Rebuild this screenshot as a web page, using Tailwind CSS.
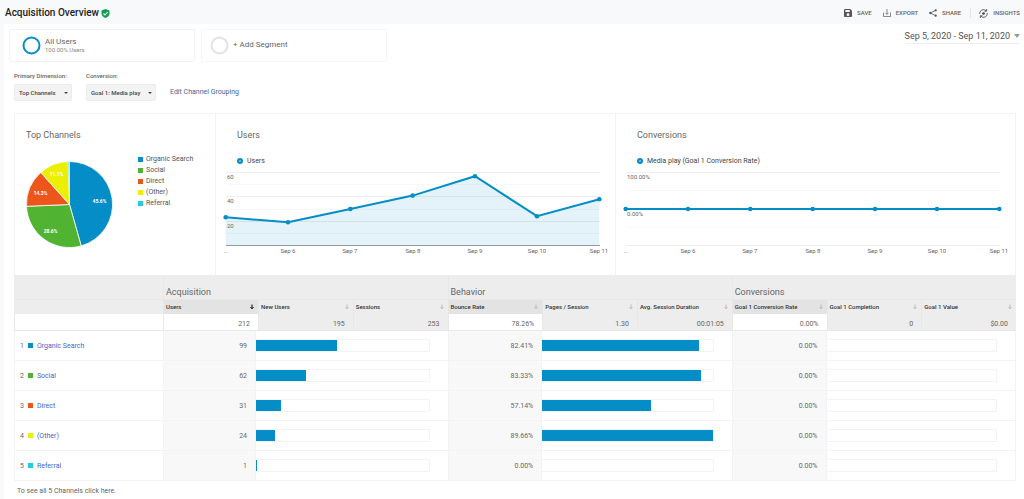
<!DOCTYPE html>
<html lang="en">
<head>
<meta charset="utf-8">
<title>Acquisition Overview</title>
<script src="https://cdn.jsdelivr.net/npm/@tailwindcss/browser@4"></script>
</head>
<body class="bg-[#f8f9fb] font-['Roboto',sans-serif] text-[7px] leading-[10px] text-[#666]">
<svg class="hidden">
  <symbol id="down" viewBox="0 0 6 8"><path d="M3 1.500v4M1.500 4.200 3 5.800l1.500-1.600" fill="none" stroke="currentColor" stroke-width="1"/></symbol>
</svg>

<header class="flex h-6 items-center justify-between pl-[5px] pr-1">
  <h1 class="flex items-center gap-[2px] pt-[2px] text-[10px] font-medium text-[#222]">Acquisition Overview
    <svg class="size-[9px]" viewBox="0 0 18 18"><path d="M9 0 17 3v6c0 4.500-3.500 7.500-8 9-4.500-1.500-8-4.500-8-9V3z" fill="#109d4c"/><path d="m5 9 3 3 5.500-6" fill="none" stroke="#fff" stroke-width="2.200"/></svg>
  </h1>
  <nav class="flex items-center gap-[11px] pt-[2px] text-[6px] font-medium text-[#666]">
    <button class="flex items-center gap-[5px]"><svg class="size-2" viewBox="0 0 18 18"><path fill="#555" fill-rule="evenodd" d="M2 0h12l4 4v12a2 2 0 0 1-2 2H2a2 2 0 0 1-2-2V2a2 2 0 0 1 2-2zm1 2v5h10V2zm6 7.500a3.200 3.200 0 1 0 0 6.400 3.200 3.200 0 0 0 0-6.400z"/></svg>SAVE</button>
    <button class="flex items-center gap-[5px]"><svg class="size-2" viewBox="0 0 18 18" fill="none" stroke="#777" stroke-width="2"><path d="M1 8v9h16V8M9 0v12M5.500 8.500 9 12l3.500-3.500"/></svg>EXPORT</button>
    <button class="flex items-center gap-[5px]"><svg class="size-2" viewBox="0 0 18 18" fill="#555"><path d="M15 3 3 9l12 6" fill="none" stroke="#555" stroke-width="1.800"/><circle cx="15" cy="3" r="2.600"/><circle cx="3" cy="9" r="2.600"/><circle cx="15" cy="15" r="2.600"/></svg>SHARE</button>
    <button class="-ml-[2px] flex items-center gap-[5px] border-l border-[#e2e3e5] pl-2"><svg class="size-[9px]" viewBox="0 0 20 20" fill="none" stroke="#555" stroke-width="2"><path d="M1.500 11A8.500 8.500 0 0 1 16 4M18.500 9A8.500 8.500 0 0 1 4 16M17 0v5h-5M3 20v-5h5"/><circle cx="10" cy="10" r="3" fill="#444" stroke="none"/></svg>INSIGHTS</button>
  </nav>
</header>

<main class="ml-1 min-h-[475px] bg-white">
  <section class="flex items-start justify-between pl-[5px] pr-1 pt-[5px]">
    <div class="flex gap-[6px]">
      <button class="flex h-[33px] w-[186px] items-center gap-1 rounded-xs border border-[#f3f3f3] pl-3 text-left">
        <svg class="size-[19px]" viewBox="0 0 19 19"><circle cx="9.500" cy="9.500" r="8" fill="none" stroke="#058dc7" stroke-width="2"/></svg>
        <span><span class="block text-[8px] leading-[9px]">All Users</span><span class="block text-[6px] leading-[8px] text-[#888]">100.00% Users</span></span>
      </button>
      <button class="flex h-[33px] w-[186px] items-center gap-1 rounded-xs border border-[#f5f5f5] pl-2 text-left">
        <svg class="size-[19px]" viewBox="0 0 19 19"><circle cx="9.500" cy="9.500" r="8" fill="none" stroke="#e2e2e2" stroke-width="2"/></svg>
        <span class="pb-[2px] text-[8px]">+ Add Segment</span>
      </button>
    </div>
    <button class="flex h-[15px] items-center gap-1 border-b border-[#eee] text-[9px] text-[#555]">Sep 5, 2020 - Sep 11, 2020
      <svg class="h-1 w-[6px]" viewBox="0 0 6 4"><path d="M0 0h6L3 4z" fill="#999"/></svg></button>
  </section>

  <section class="flex items-end gap-[14px] pl-[10px] pt-[9px] text-[6px]">
    <div><label for="dimension" class="block font-medium">Primary Dimension:</label>
      <div class="relative mt-[3px] w-[58px]"><select id="dimension" class="block h-[17px] w-full appearance-none rounded-xs border border-[#ececec] bg-[#f3f3f3] pl-1 font-medium text-[#444]"><option>Top Channels</option></select>
      <svg class="pointer-events-none absolute right-1 top-2 h-[2px] w-1" viewBox="0 0 4 2"><path d="M0 0h4L2 2z" fill="#444"/></svg></div></div>
    <div><label for="conversion" class="block font-medium">Conversion:</label>
      <div class="relative mt-[3px] w-[70px]"><select id="conversion" class="block h-[17px] w-full appearance-none rounded-xs border border-[#ececec] bg-[#f3f3f3] pl-1 font-medium text-[#444]"><option>Goal 1: Media play</option></select>
      <svg class="pointer-events-none absolute right-1 top-2 h-[2px] w-1" viewBox="0 0 4 2"><path d="M0 0h4L2 2z" fill="#444"/></svg></div></div>
    <a href="#" class="pb-1 text-[7px] text-[#44689b]">Edit Channel Grouping</a>
  </section>

  <div class="ml-[10px] mr-2 mt-3">
    <section class="grid grid-cols-[200px_1fr_1fr] border border-b-0 border-[#f3f3f3]">
      <div class="pb-[27px] pl-[11px] pt-4">
        <h2 class="text-[9px]">Top Channels</h2>
        <div class="mt-[14px] flex gap-[25px]">
          <svg class="mt-[7px] size-[87px]" viewBox="-43.500 -43.500 87 87" stroke="#fff" stroke-width=".800">
            <path fill="#058dc7" d="M0 0V-43A43 43 0 0 1 11.700 41.400Z"/>
            <path fill="#50b432" d="M0 0 11.700 41.400A43 43 0 0 1-43 1.800Z"/>
            <path fill="#ed561b" d="M0 0-43 1.800A43 43 0 0 1-28.700-32Z"/>
            <path fill="#edef00" d="M0 0-28.700-32A43 43 0 0 1-1.500-43Z"/>
            <path fill="#9fe3f5" stroke="none" d="M0 0-1.500-43H0Z"/>
            <g fill="#fff" stroke="none" font-size="5" font-weight="700" text-anchor="middle"><text x="30" y="-2">45.6%</text><text x="-19" y="28">28.6%</text><text x="-29" y="-10">14.3%</text><text x="-13" y="-29">11.1%</text></g>
          </svg>
          <ul class="text-[7px] leading-[11px] text-[#555] [&>li]:flex [&>li]:items-center [&>li]:gap-[3px] [&_i]:size-[5px]">
            <li><i class="bg-[#058dc7]"></i>Organic Search</li>
            <li><i class="bg-[#50b432]"></i>Social</li>
            <li><i class="bg-[#ed561b]"></i>Direct</li>
            <li><i class="bg-[#edef00]"></i>(Other)</li>
            <li><i class="bg-[#24cbe5]"></i>Referral</li>
          </ul>
        </div>
      </div>
      <div class="border-l border-[#f3f3f3] pb-3 pt-4">
        <h2 class="pl-[21px] text-[9px]">Users</h2>
        <p class="mt-4 flex items-center gap-1 pl-[21px] text-[#444]"><i class="size-[6px] rounded-full border-2 border-[#058dc7] bg-[#7cc3e3]"></i>Users</p>
        <svg class="block w-full" viewBox="0 0 399 94">
          <path d="M10 6.500h374M10 30.500h374M10 55.500h374" stroke="#eee"/><path d="M10 18.500h374M10 43.500h374M10 67.500h374" stroke="#f8f8f8"/>
          <path d="M9.700 51.300 72 56.300 134.300 43 196.700 29.600 259 10.200 321 50.200 383.300 33.300V79H9.700Z" fill="#058dc7" fill-opacity=".11"/>
          <path d="M10 79.500h374" stroke="#999"/>
          <path d="M9.700 51.300 72 56.300 134.300 43 196.700 29.600 259 10.200 321 50.200 383.300 33.300" fill="none" stroke="#058dc7" stroke-width="2"/>
          <g fill="#058dc7"><circle cx="9.700" cy="51.300" r="2.300"/><circle cx="72" cy="56.300" r="2.300"/><circle cx="134.300" cy="43" r="2.300"/><circle cx="196.700" cy="29.600" r="2.300"/><circle cx="259" cy="10.200" r="2.300"/><circle cx="321" cy="50.200" r="2.300"/><circle cx="383.300" cy="33.300" r="2.300"/></g>
          <g fill="#666" font-size="6"><text x="11" y="13">60</text><text x="11" y="37">40</text><text x="11" y="62">20</text>
          <g text-anchor="middle"><text x="10" y="87">...</text><text x="72" y="87">Sep 6</text><text x="134" y="87">Sep 7</text><text x="197" y="87">Sep 8</text><text x="259" y="87">Sep 9</text><text x="321" y="87">Sep 10</text><text x="383" y="87">Sep 11</text></g></g>
        </svg>
      </div>
      <div class="border-l border-[#f3f3f3] pb-3 pt-4">
        <h2 class="pl-[21px] text-[9px]">Conversions</h2>
        <p class="mt-4 flex items-center gap-1 pl-[21px] text-[#444]"><i class="size-[6px] rounded-full border-2 border-[#058dc7] bg-[#7cc3e3]"></i>Media play (Goal 1 Conversion Rate)</p>
        <svg class="block w-full" viewBox="0 0 399 94">
          <path d="M10 6.500h374M10 79.500h374" stroke="#eee"/><path d="M10 24.500h374M10 61.500h374" stroke="#f8f8f8"/>
          <path d="M9.700 43h373.600" stroke="#058dc7" stroke-width="2"/>
          <g fill="#058dc7"><circle cx="9.700" cy="43" r="2.300"/><circle cx="72" cy="43" r="2.300"/><circle cx="134.300" cy="43" r="2.300"/><circle cx="196.700" cy="43" r="2.300"/><circle cx="259" cy="43" r="2.300"/><circle cx="321" cy="43" r="2.300"/><circle cx="383.300" cy="43" r="2.300"/></g>
          <g fill="#666" font-size="6"><text x="11" y="13">100.00%</text><text x="11" y="50">0.00%</text>
          <g text-anchor="middle"><text x="10" y="87">...</text><text x="72" y="87">Sep 6</text><text x="134" y="87">Sep 7</text><text x="197" y="87">Sep 8</text><text x="259" y="87">Sep 9</text><text x="321" y="87">Sep 10</text><text x="383" y="87">Sep 11</text></g></g>
        </svg>
      </div>
    </section>

    <table class="w-full table-fixed border-separate border-spacing-0 [&_button]:flex [&_button]:w-full [&_button]:items-center [&_button]:justify-between [&_button_svg]:h-2 [&_button_svg]:w-[6px] [&_button_svg]:text-[#bbb]">
      <colgroup><col class="w-[149px]"><col class="w-[93px]"><col class="w-[2px]"><col><col><col><col><col><col><col><col></colgroup>
      <thead class="bg-[#ededed]">
        <tr class="h-[25px] text-left align-bottom text-[9px] [&>th]:border-b [&>th]:border-[#e8e8e8] [&>th]:pb-[2px] [&>th]:pl-[2px] [&>th]:font-normal [&>th+th]:border-l">
          <td class="border-b border-[#e8e8e8]"></td><th colspan="4" scope="colgroup" class="border-l">Acquisition</th><th colspan="3" scope="colgroup">Behavior</th><th colspan="3" scope="colgroup">Conversions</th>
        </tr>
        <tr class="h-[14px] text-[6px] leading-[8px] text-[#333] [&>th]:border-l [&>th]:border-[#e6e6e6] [&>th]:p-0 [&>th]:pl-[2px] [&>th]:pr-[3px] [&>th]:font-medium">
          <td></td>
          <th colspan="2" scope="col" class="bg-[#e3e3e3]"><button>Users<svg class="text-black!"><use href="#down"/></svg></button></th>
          <th scope="col"><button>New Users<svg><use href="#down"/></svg></button></th>
          <th scope="col"><button>Sessions<svg><use href="#down"/></svg></button></th>
          <th scope="col" class="bg-[#e3e3e3]"><button>Bounce Rate<svg><use href="#down"/></svg></button></th>
          <th scope="col"><button>Pages / Session<svg><use href="#down"/></svg></button></th>
          <th scope="col"><button>Avg. Session Duration<svg><use href="#down"/></svg></button></th>
          <th scope="col" class="bg-[#e3e3e3]"><button>Goal 1 Conversion Rate<svg><use href="#down"/></svg></button></th>
          <th scope="col"><button>Goal 1 Completion<svg><use href="#down"/></svg></button></th>
          <th scope="col"><button>Goal 1 Value<svg><use href="#down"/></svg></button></th>
        </tr>
        <tr class="h-[17px] text-right [&>td]:border-b [&>td]:border-l [&>td]:border-[#e8e8e8] [&>td]:p-0 [&>td]:pr-2 [&>td]:pt-1">
          <td class="bg-white"></td><td colspan="2" class="bg-white">212</td><td>195</td><td>253</td><td class="bg-white">78.26%</td><td>1.30</td><td>00:01:05</td><td class="bg-white">0.00%</td><td>0</td><td>$0.00</td>
        </tr>
      </thead>
      <tbody class="[&>tr]:h-[30px] [&>tr>*]:border-b [&>tr>*]:border-[#f3f3f3] [&>tr>*]:p-0 [&>tr>th]:border-l [&>tr>th]:pl-[5px] [&>tr>th]:text-left [&>tr>th]:font-normal [&_th_span]:flex [&_th_span]:items-center [&_th_i]:ml-1 [&_th_i]:mr-1 [&_th_i]:size-[5px] [&_a]:text-[#4a66c4] [&_[data-n]]:border-x [&_[data-n]]:bg-[#f8f8f8] [&_[data-n]]:pr-2 [&_[data-n]]:text-right [&_[data-b]]:pr-[18px] [&_[data-b]>div]:h-[13px] [&_[data-b]>div]:border [&_[data-b]>div]:border-l-0 [&_[data-b]>div]:border-[#f3f3f3] [&_[data-b]>div>div]:h-[11px] [&_[data-b]>div>div]:bg-[#058dc7]">
        <tr><th scope="row"><span>1<i class="bg-[#058dc7]"></i><a href="#">Organic Search</a></span></th>
          <td data-n>99</td><td data-b colspan="3"><div><div style="width:46.7%"></div></div></td>
          <td data-n>82.41%</td><td data-b colspan="2"><div><div style="width:91.9%"></div></div></td>
          <td data-n>0.00%</td><td data-b colspan="2" class="border-r"><div></div></td></tr>
        <tr><th scope="row"><span>2<i class="bg-[#50b432]"></i><a href="#">Social</a></span></th>
          <td data-n>62</td><td data-b colspan="3"><div><div style="width:29.2%"></div></div></td>
          <td data-n>83.33%</td><td data-b colspan="2"><div><div style="width:92.9%"></div></div></td>
          <td data-n>0.00%</td><td data-b colspan="2" class="border-r"><div></div></td></tr>
        <tr><th scope="row"><span>3<i class="bg-[#ed561b]"></i><a href="#">Direct</a></span></th>
          <td data-n>31</td><td data-b colspan="3"><div><div style="width:14.6%"></div></div></td>
          <td data-n>57.14%</td><td data-b colspan="2"><div><div style="width:63.7%"></div></div></td>
          <td data-n>0.00%</td><td data-b colspan="2" class="border-r"><div></div></td></tr>
        <tr><th scope="row"><span>4<i class="bg-[#edef00]"></i><a href="#">(Other)</a></span></th>
          <td data-n>24</td><td data-b colspan="3"><div><div style="width:11.3%"></div></div></td>
          <td data-n>89.66%</td><td data-b colspan="2"><div><div style="width:100%"></div></div></td>
          <td data-n>0.00%</td><td data-b colspan="2" class="border-r"><div></div></td></tr>
        <tr><th scope="row"><span>5<i class="bg-[#24cbe5]"></i><a href="#">Referral</a></span></th>
          <td data-n>1</td><td data-b colspan="3"><div><div style="width:0.5%"></div></div></td>
          <td data-n>0.00%</td><td data-b colspan="2"><div></div></td>
          <td data-n>0.00%</td><td data-b colspan="2" class="border-r"><div></div></td></tr>
      </tbody>
    </table>
    <p class="pl-[3px] pt-[5px]">To see all 5 Channels click <a href="#" class="text-[#44689b]">here</a>.</p>
  </div>
</main>
</body>
</html>
